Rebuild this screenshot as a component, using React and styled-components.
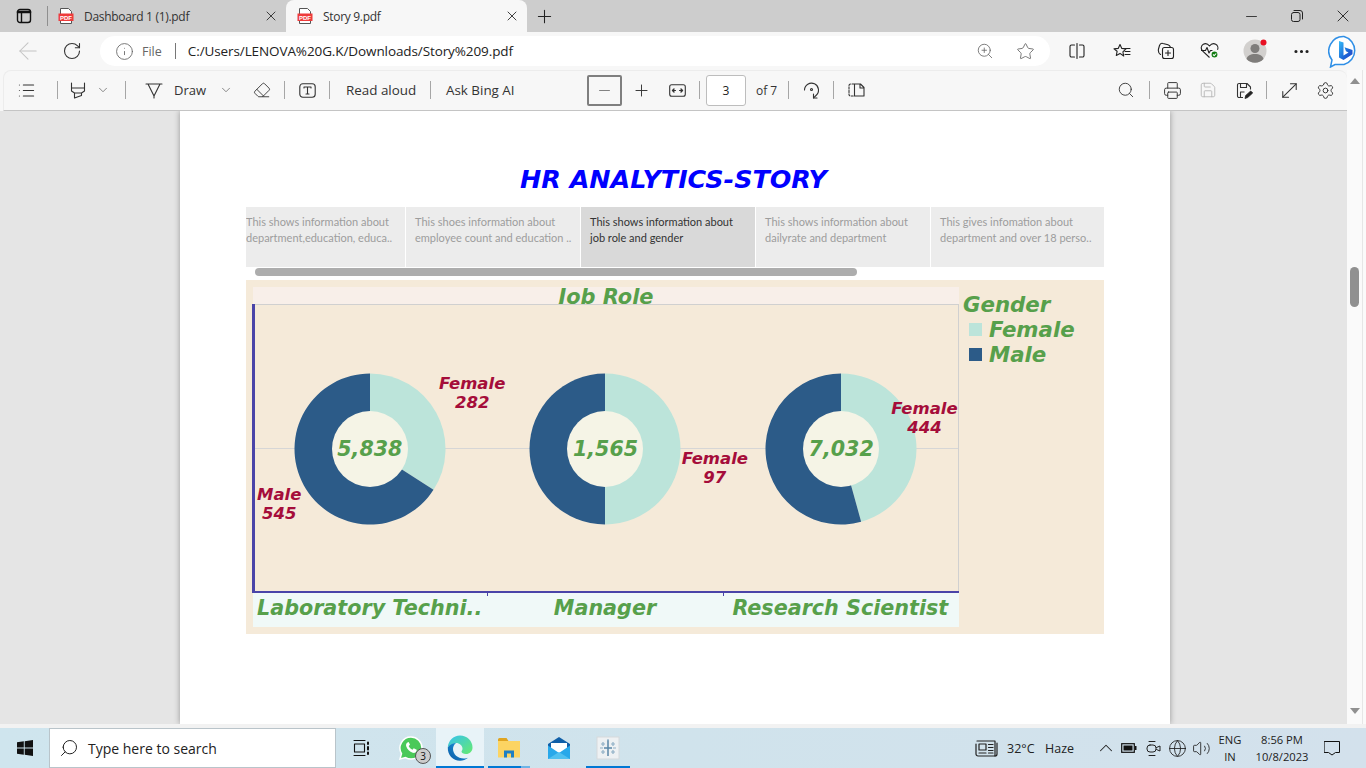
import React from "react"
import styled, { createGlobalStyle } from "styled-components"
import {
  ArrowLeft,
  ChevronDown,
  ChevronUp,
  Ellipsis,
  Globe,
  Info,
  List,
  Minus,
  MoveDiagonal,
  Plus,
  Printer,
  RotateCw,
  Save,
  Search,
  Settings,
  Star,
  Eraser,
  Volume2,
  X,
  ZoomIn,
} from "lucide-react"

const uiFont = `"Open Sans", "Noto Sans", sans-serif`
const chartFont = `"DejaVu Sans", sans-serif`
const storyFont = `"Lato", "Open Sans", sans-serif`

const storyPoints = [
  { width: 159, pad: 0, lines: ["This shows information about", "department,education, educa.."] },
  { width: 174, pad: 9, lines: ["This shoes information about", "employee count and education .."] },
  { width: 174, pad: 9, active: true, lines: ["This shows information about", "job role and gender"] },
  { width: 174, pad: 9, lines: ["This shows information about", "dailyrate and department"] },
  { width: 173, pad: 9, lines: ["This gives infomation about", "department and over 18 perso.."] },
]

const donuts = [
  { role: "Laboratory Techni..", total: "5,838", female: 0.341, label: ["Male", "545"], x: 5, y: 181 },
  { role: "Manager", total: "1,565", female: 0.5, label: ["Female", "97"], x: 194, y: 145 },
  { role: "Research Scientist", total: "7,032", female: 0.457, label: ["Female", "444"], x: 168, y: 95 },
]

export default function App() {
  return (
    <Screen>
      <GlobalStyle />
      <TitleBar>
        <Slot $w={47}><SidebarIcon /></Slot>
        <TabDivider />
        <Tab $w={238}>
          <PdfIcon />
          <TabName>Dashboard 1 (1).pdf</TabName>
          <X size={16} strokeWidth={1.4} color="#333" />
        </Tab>
        <Tab $w={241} $active>
          <PdfIcon />
          <TabName>Story 9.pdf</TabName>
          <X size={16} strokeWidth={1.4} color="#333" />
        </Tab>
        <Slot $w={34}><Plus size={21} strokeWidth={1.2} color="#222" /></Slot>
        <Spacer />
        <Slot $w={46}><Minus size={17} strokeWidth={1.2} color="#222" /></Slot>
        <Slot $w={46}><RestoreIcon /></Slot>
        <Slot $w={46}><X size={20} strokeWidth={1.1} color="#222" /></Slot>
      </TitleBar>

      <AddressRow>
        <Slot $w={56}><ArrowLeft size={28} strokeWidth={0.9} color="#c4c4c4" /></Slot>
        <Slot $w={32}><RotateCw size={20} strokeWidth={1.3} color="#333" /></Slot>
        <Slot $w={12} />
        <UrlPill>
          <Slot $w={25}><Info size={19} strokeWidth={1.1} color="#666" /></Slot>
          <FileLabel>File</FileLabel>
          <UrlDivider />
          <UrlText>C:/Users/LENOVA%20G.K/Downloads/Story%209.pdf</UrlText>
          <Spacer />
          <Slot $w={40}><ZoomIn size={18} strokeWidth={1.1} color="#666" /></Slot>
          <Slot $w={40}><Star size={19} strokeWidth={1.1} color="#666" /></Slot>
          <Slot $w={5} />
        </UrlPill>
        <Slot $w={5} />
        <Slot $w={44}><SplitIcon /></Slot>
        <Slot $w={45}><FavouritesIcon /></Slot>
        <Slot $w={44}><CollectionsIcon /></Slot>
        <Slot $w={44}><HealthIcon /></Slot>
        <Slot $w={48}><AvatarIcon /></Slot>
        <Slot $w={42}><Ellipsis size={19} strokeWidth={2} color="#222" /></Slot>
        <Slot $w={44}><BingIcon /></Slot>
      </AddressRow>

      <Body>
        <Column>
          <Toolbar>
            <Slot $w={45}><List size={19} strokeWidth={1.3} color="#333" /></Slot>
            <Slot $w={16}><Sep /></Slot>
            <Slot $w={25}><HighlighterIcon /></Slot>
            <Slot $w={26}><ChevronDown size={14} strokeWidth={1.3} color="#666" /></Slot>
            <Slot $w={18}><Sep /></Slot>
            <Slot $w={40}><DrawIcon /></Slot>
            <ToolLabel $w={36}>Draw</ToolLabel>
            <Slot $w={32}><ChevronDown size={14} strokeWidth={1.3} color="#666" /></Slot>
            <Slot $w={40}><Eraser size={18} strokeWidth={1.2} color="#333" /></Slot>
            <Slot $w={4}><Sep /></Slot>
            <Slot $w={42}><TextBoxIcon /></Slot>
            <Slot $w={2}><Sep /></Slot>
            <ToolLabel $w={99} $pad={16} $wide>Read aloud</ToolLabel>
            <Slot $w={2}><Sep /></Slot>
            <ToolLabel $w={156} $pad={15} $wide>Ask Bing AI</ToolLabel>
            <ZoomOutBox><Minus size={17} strokeWidth={1.3} color="#777" /></ZoomOutBox>
            <Slot $w={38}><Plus size={19} strokeWidth={1.2} color="#333" /></Slot>
            <Slot $w={34}><FitWidthIcon /></Slot>
            <Slot $w={11}><Sep /></Slot>
            <PageBox>3</PageBox>
            <ToolLabel $w={38} $pad={10} $small>of 7</ToolLabel>
            <Slot $w={8}><Sep /></Slot>
            <Slot $w={38}><RotateIcon /></Slot>
            <Slot $w={6}><Sep /></Slot>
            <Slot $w={40}><PageViewIcon /></Slot>
            <Spacer />
            <Slot $w={40}><Search size={18} strokeWidth={1.2} color="#333" /></Slot>
            <Slot $w={7}><Sep /></Slot>
            <Slot $w={38}><Printer size={19} strokeWidth={1.2} color="#333" /></Slot>
            <Slot $w={34}><Save size={18} strokeWidth={1.2} color="#b5b5b5" /></Slot>
            <Slot $w={38}><SaveAsIcon /></Slot>
            <Slot $w={6}><Sep /></Slot>
            <Slot $w={40}><MoveDiagonal size={23} strokeWidth={1.1} color="#333" /></Slot>
            <Slot $w={32}><Settings size={19} strokeWidth={1.2} color="#333" /></Slot>
            <Slot $w={6} />
          </Toolbar>

          <Viewer>
            <Page>
              <StoryTitle>HR ANALYTICS-STORY</StoryTitle>
              <StoryStrip>
                {storyPoints.map((point) => (
                  <StoryTab key={point.lines[0] + point.lines[1]} $w={point.width} $pad={point.pad} $active={point.active}>
                    {point.lines.map((line) => (
                      <div key={line}>{line}</div>
                    ))}
                  </StoryTab>
                ))}
              </StoryStrip>
              <StoryScroll />
              <Dashboard>
                <ChartPane>
                  <ChartHeader><HeaderText>Job Role</HeaderText></ChartHeader>
                  <Plot>
                    {donuts.map((d) => (
                      <DonutCell key={d.role}>
                        <Donut female={d.female} />
                        <DonutTotal>{d.total}</DonutTotal>
                        <MarkLabel $x={d.x} $y={d.y}>
                          {d.label[0]}
                          <br />
                          {d.label[1]}
                        </MarkLabel>
                        {d.role === "Laboratory Techni.." && (
                          <MarkLabel $x={187} $y={70}>
                            Female
                            <br />
                            282
                          </MarkLabel>
                        )}
                      </DonutCell>
                    ))}
                  </Plot>
                  <AxisRow>
                    {donuts.map((d) => (
                      <AxisCell key={d.role}>{d.role}</AxisCell>
                    ))}
                  </AxisRow>
                </ChartPane>
                <Legend>
                  <LegendTitle>Gender</LegendTitle>
                  <LegendItem><Swatch $color="#bce4da" />Female</LegendItem>
                  <LegendItem><Swatch $color="#2c5b88" />Male</LegendItem>
                </Legend>
              </Dashboard>
            </Page>
          </Viewer>
        </Column>
        <PageScroll>
          <ArrowUpGlyph />
          <Thumb />
          <ArrowDownGlyph />
        </PageScroll>
      </Body>

      <TaskStrip />
      <Taskbar>
        <Slot $w={49}><WindowsIcon /></Slot>
        <SearchBox>
          <Search size={20} strokeWidth={1.2} color="#222" style={{ transform: "scaleX(-1)" }} />
          <span>Type here to search</span>
        </SearchBox>
        <Slot $w={50}><TaskViewIcon /></Slot>
        <TaskApp $w={50}><WhatsAppIcon /><Badge>3</Badge></TaskApp>
        <TaskApp $w={48} $active $line={0}><EdgeIcon /></TaskApp>
        <TaskApp $w={50} $line={4} $fade><FolderIcon /></TaskApp>
        <TaskApp $w={50}><MailIcon /></TaskApp>
        <TaskApp $w={48} $line={2}><TableauIcon /></TaskApp>
        <Spacer />
        <Slot $w={30}><NewsIcon /></Slot>
        <Slot $w={6} />
        <TrayText $w={38}>32°C</TrayText>
        <TrayText $w={50}>Haze</TrayText>
        <Slot $w={22}><ChevronUp size={22} strokeWidth={1.1} color="#222" /></Slot>
        <Slot $w={24}><BatteryIcon /></Slot>
        <Slot $w={24}><CameraIcon /></Slot>
        <Slot $w={24}><Globe size={19} strokeWidth={1.1} color="#222" /></Slot>
        <Slot $w={24}><Volume2 size={19} strokeWidth={1.1} color="#222" /></Slot>
        <TrayStack $w={34}><span>ENG</span><span>IN</span></TrayStack>
        <TrayStack $w={70}><span>8:56 PM</span><span>10/8/2023</span></TrayStack>
        <Slot $w={30}><NoticeIcon /></Slot>
        <Slot $w={19} />
      </Taskbar>
    </Screen>
  )
}

function Donut({ female }) {
  const r = 75.5
  const hole = 38
  const c = 80
  const angle = female * Math.PI * 2
  const px = (radius) => c + radius * Math.sin(angle)
  const py = (radius) => c - radius * Math.cos(angle)
  const large = female > 0.5 ? 1 : 0
  const femalePath = `M${c} ${c}L${c} ${c - r}A${r} ${r} 0 ${large} 1 ${px(r)} ${py(r)}Z`
  const malePath = `M${c} ${c}L${px(r)} ${py(r)}A${r} ${r} 0 ${1 - large} 1 ${c} ${c - r}Z`
  return (
    <svg width="160" height="160" viewBox="0 0 160 160">
      <path d={femalePath} fill="#bce4da" />
      <path d={malePath} fill="#2c5b88" />
      <circle cx={c} cy={c} r={hole} fill="#f5f4e6" />
    </svg>
  )
}

function Svg({ w = 18, h = 18, box, children, stroke = "#333", sw = 1.2 }) {
  return (
    <svg width={w} height={h} viewBox={box || `0 0 ${w} ${h}`} fill="none" stroke={stroke} strokeWidth={sw} strokeLinejoin="round" strokeLinecap="round">
      {children}
    </svg>
  )
}

const SidebarIcon = () => (
  <Svg w={16} h={16} stroke="#111" sw={1.4}>
    <rect x="1.5" y="1.5" width="13" height="13" rx="2.5" />
    <path d="M2 4h12" strokeWidth="2.6" />
    <path d="M5.5 4v10" />
  </Svg>
)

const PdfIcon = () => (
  <svg width="16" height="16" viewBox="0 0 16 16">
    <path d="M2.5.5h8l3 3v12h-11z" fill="#fff" stroke="#555" strokeWidth="1" />
    <rect x="0.5" y="5.5" width="15" height="7.5" fill="#ee3b3b" />
    <text x="8" y="11.5" textAnchor="middle" fontSize="6" fontWeight="700" fill="#fff" fontFamily="Liberation Sans, sans-serif">PDF</text>
  </svg>
)

const RestoreIcon = () => (
  <Svg w={12} h={12} stroke="#222" sw={1}>
    <rect x="0.5" y="2.5" width="8.5" height="9" rx="2" />
    <path d="M3 .5h6a2.5 2.5 0 0 1 2.5 2.5v6" />
  </Svg>
)

const SplitIcon = () => (
  <Svg w={16} h={16} stroke="#222" sw={1.1}>
    <path d="M8 .5v15M5.5 2H2.5A1.5 1.5 0 0 0 1 3.5v9A1.5 1.5 0 0 0 2.5 14h3M10.5 2h3A1.5 1.5 0 0 1 15 3.5v9a1.5 1.5 0 0 1-1.500 1.500h-3" />
  </Svg>
)

const FavouritesIcon = () => (
  <Svg w={18} h={16} stroke="#222" sw={1.1}>
    <path d="M7 1.500l1.800 3.900 4.200.5-3.100 2.900.8 4.200L7 10.400 3.300 12.500l.8-4.200L1 5.900l4.200-.5z" />
    <path d="M12 5.500h5M12 8.500h5M12 11.500h5" />
  </Svg>
)

const CollectionsIcon = () => (
  <Svg w={18} h={18} stroke="#222" sw={1.1}>
    <rect x="5.500" y="5.500" width="11" height="11" rx="2" />
    <path d="M11 8.500v5M8.500 11h5" />
    <path d="M3.500 12.500C2 11.500 1 9.500 1.500 7L2.500 3.500C3 2 4.500 1 6 1.500l5 1.300c1.200.3 2 1.100 2.300 2.200" />
  </Svg>
)

const HealthIcon = () => (
  <svg width="20" height="18" viewBox="0 0 20 18" fill="none" stroke="#222" strokeWidth="1.1" strokeLinejoin="round">
    <path d="M9.500 15.500L2.500 8.800C.5 6.800 1 3.500 3.300 2.200c2-1 4.500-.5 6.200 1.800C11.200 1.700 13.700 1.200 15.700 2.200c2 1 2.700 3.500 1.800 5.500" />
    <path d="M1 8.500h4.500l1.500-3 2 5.500 1.500-2.500h2" />
    <circle cx="14.500" cy="12.500" r="3.500" fill="#107c10" stroke="#f7f7f7" />
    <path d="M13 12.500l1.200 1.200 2-2.200" stroke="#fff" />
  </svg>
)

const AvatarIcon = () => (
  <svg width="26" height="24" viewBox="0 0 26 24">
    <circle cx="12" cy="12" r="11.500" fill="#d2d0ce" />
    <circle cx="12" cy="9.500" r="4.500" fill="#7f7d7b" />
    <path d="M3.500 20c.8-3.500 4-5 8.500-5s7.700 1.500 8.500 5a11.500 11.500 0 0 1-17 0z" fill="#7f7d7b" />
    <circle cx="20.500" cy="3.500" r="3" fill="#e81123" />
  </svg>
)

const BingIcon = () => (
  <svg width="32" height="33" viewBox="0 0 32 33">
    <defs>
      <linearGradient id="bingGrad" x1="0" y1="0" x2="1" y2="1">
        <stop offset="0" stopColor="#37bdf8" />
        <stop offset="0.6" stopColor="#1b66d6" />
        <stop offset="1" stopColor="#2a3fc4" />
      </linearGradient>
    </defs>
    <path d="M16 1.500A14.500 14.500 0 0 1 16 29.500H7L2.500 32 4 25A14.500 14.500 0 0 1 16 1.500z" fill="#fff" stroke="#2f8fe6" strokeWidth="1.500" />
    <path d="M11 6l4.500 1.500v13l5-3-2.500-1.200-1.500-4 8 2.800v4.200L15.500 25 11 22.500z" fill="url(#bingGrad)" />
  </svg>
)

const HighlighterIcon = () => (
  <Svg w={16} h={17} stroke="#333" sw={1.1}>
    <path d="M1.500 1v5h13V1M1.500 6v3l3 2v5l7-2.500V11l3-2V6M4.500 11h7" />
  </Svg>
)

const DrawIcon = () => (
  <Svg w={18} h={18} stroke="#333" sw={1.1}>
    <path d="M1 3h16M3 3l6 12 6-12M9 15v2" />
  </Svg>
)

const TextBoxIcon = () => (
  <Svg w={17} h={15} stroke="#333" sw={1.1}>
    <rect x="0.800" y="0.800" width="15.400" height="13.400" rx="3" />
    <path d="M5 4h7M5 4v1M12 4v1M8.500 4v7M7 11h3" />
  </Svg>
)

const FitWidthIcon = () => (
  <Svg w={17} h={13} stroke="#333" sw={1.1}>
    <rect x="0.700" y="0.700" width="15.600" height="11.600" rx="2" />
    <path d="M3.500 6.500h3M10.500 6.500h3" />
    <path d="M5 5L3.500 6.500 5 8M12 5l1.500 1.500L12 8" strokeWidth="1.400" />
  </Svg>
)

const RotateIcon = () => (
  <Svg w={17} h={18} stroke="#333" sw={1.1}>
    <path d="M1.500 9A7 7 0 1 1 13 14.500L10.500 16.800" />
    <path d="M10.500 13v4h3.500" />
    <circle cx="8.500" cy="8.500" r="1" />
  </Svg>
)

const PageViewIcon = () => (
  <Svg w={17} h={14} stroke="#333" sw={1.1}>
    <path d="M6 1H2.500A1.500 1.500 0 0 0 1 2.500v9A1.500 1.500 0 0 0 2.500 13H6" strokeDasharray="2 1.500" />
    <path d="M6.500 1h6L16 4.500V13H6.500zM12 1v4h4" />
  </Svg>
)

const SaveAsIcon = () => (
  <svg width="17" height="17" viewBox="0 0 17 17" fill="none" stroke="#333" strokeWidth="1.1" strokeLinejoin="round">
    <path d="M7 15.500H3A1.500 1.500 0 0 1 1.500 14V3A1.500 1.500 0 0 1 3 1.500h8L14.500 5v2.500" />
    <path d="M4.500 1.500v4h6v-4M4.500 15v-5h4" />
    <path d="M9 16.500l.7-3 5-4.500 2 2-5 4.500z" fill="#222" stroke="#222" strokeWidth="0.800" />
  </svg>
)

const WindowsIcon = () => (
  <svg width="16" height="16" viewBox="0 0 16 16" fill="#111">
    <path d="M0 2.300L6.800 1.300v6.200H0zM7.700 1.200L16 0v7.500H7.700zM0 8.500h6.800v6.200L0 13.700zM7.700 8.500H16V16l-8.300-1.200z" />
  </svg>
)

const TaskViewIcon = () => (
  <Svg w={17} h={18} stroke="#111" sw={1.1}>
    <path d="M1 1.500h11M1 16.500h11" />
    <rect x="1.500" y="5" width="10" height="8" />
    <path d="M15 3.500v1.500M15 8v2.500M15 13.500V15" strokeWidth="2" />
  </Svg>
)

const WhatsAppIcon = () => (
  <svg width="24" height="24" viewBox="0 0 24 24">
    <path d="M12 1a11 11 0 0 1 0 22c-2 0-3.800-.5-5.400-1.400L1 23l1.500-5.400A11 11 0 0 1 12 1z" fill="#4ac959" stroke="#fff" strokeWidth="1.500" />
    <path d="M8.500 6.500c-1 .5-1.800 2-1.300 3.800 1 3 3.500 5.500 6.500 6.500 1.800.5 3.300-.3 3.800-1.500l.2-1.500-3-1.500-1.200 1.500c-1.800-.8-3-2-3.800-3.800l1.300-1.200-1.300-2.800z" fill="#fff" />
  </svg>
)

const EdgeIcon = () => (
  <svg width="26" height="26" viewBox="0 0 26 26">
    <defs>
      <linearGradient id="edgeA" x1="0" y1="1" x2="1" y2="0">
        <stop offset="0" stopColor="#0c59a4" />
        <stop offset="1" stopColor="#1b9de2" />
      </linearGradient>
      <linearGradient id="edgeB" x1="0" y1="0" x2="1" y2="1">
        <stop offset="0" stopColor="#35c1f1" />
        <stop offset="1" stopColor="#66eb6e" />
      </linearGradient>
    </defs>
    <path d="M13 .500C20 .500 25.500 6 25.500 12.500c0 4-3 6.500-6.500 6.500-2.500 0-4.500-1-4.500-2.500 0-.7 1-1 1-3 0-3-3-5.500-6.500-5.500C5 8.500 2.500 10 .800 12.500 1 6 6.500.500 13 .500z" fill="url(#edgeB)" />
    <path d="M.800 12.500C2.500 9.500 5.500 8 9 8c-2 1.500-3 3.500-3 6 0 5 4.500 9.500 11 9.500 1.500 0 3-.3 4-.8-2.200 2-5 3-8 3C6 25.700.500 20 .800 12.500z" fill="url(#edgeA)" />
  </svg>
)

const FolderIcon = () => (
  <svg width="24" height="22" viewBox="0 0 24 22">
    <path d="M1 2.500A1.500 1.500 0 0 1 2.500 1h7l2 3H1z" fill="#e0a420" />
    <path d="M1 4h22v16.500H1z" fill="#fcd462" />
    <path d="M7 20.500v-7h10v7h-3v-4h-4v4z" fill="#1e7fc4" />
  </svg>
)

const MailIcon = () => (
  <svg width="24" height="24" viewBox="0 0 24 24">
    <path d="M12 1L1 8v15h22V8z" fill="#0f5fa8" />
    <path d="M4 7h16v6l-8 5-8-5z" fill="#fff" />
    <path d="M1 9.500L12 17l11-7.500V23H1z" fill="#28a8ea" />
    <path d="M1 23l11-7 11 7z" fill="#50c0f0" />
  </svg>
)

const TableauIcon = () => (
  <svg width="24" height="24" viewBox="0 0 24 24" fill="none">
    <rect x="1" y="1" width="22" height="22" fill="#eef1f3" stroke="#d5d9dc" />
    <path d="M12 4v16M8 12h8" stroke="#5b87a8" strokeWidth="1.500" />
    <path d="M4 12h3M17 12h3M12 3v2M7 6v4M5 8h4M17 6v4M15 8h4M7 14v4M5 16h4M17 14v4M15 16h4" stroke="#8fb0c6" strokeWidth="1.200" />
  </svg>
)

const NewsIcon = () => (
  <Svg w={24} h={17} stroke="#222" sw={1.2}>
    <path d="M3 1h18v15H4a2 2 0 0 1-2-2V4" />
    <path d="M23 3v11a2 2 0 0 1-2 2" />
    <rect x="5" y="4" width="7" height="6" />
    <path d="M5 13h7M14.500 4.500H19M14.500 7.500H19M14.500 10.500H19M14.500 13H19" />
  </Svg>
)

const BatteryIcon = () => (
  <svg width="16" height="10" viewBox="0 0 16 10">
    <rect x="0.700" y="0.700" width="12.600" height="8.600" fill="none" stroke="#111" strokeWidth="1.200" />
    <rect x="2.500" y="2.500" width="9" height="5" fill="#111" />
    <rect x="14" y="3" width="1.500" height="4" fill="#111" />
  </svg>
)

const CameraIcon = () => (
  <Svg w={15} h={17} stroke="#222" sw={1}>
    <path d="M3 1.500h6M3 15.500h6" />
    <rect x="1" y="5" width="9" height="7" rx="3" />
    <path d="M10.500 7.500l3.500-1.500v5l-3.500-1.500" />
  </Svg>
)

const NoticeIcon = () => (
  <Svg w={16} h={16} stroke="#111" sw={1}>
    <path d="M.5 1.500h15v11h-4l-3.500 2.500-3.500-2.500h-4z" />
  </Svg>
)

const GlobalStyle = createGlobalStyle`
  html, body {
    margin: 0;
    padding: 0;
    overflow: hidden;
  }
  * {
    box-sizing: border-box;
  }
`

const Screen = styled.div`
  width: 1366px;
  height: 768px;
  display: flex;
  flex-direction: column;
  overflow: hidden;
  font-family: ${uiFont};
  color: #222;
  background: #f7f7f7;
`

const Spacer = styled.div`
  flex: 1;
`

const Slot = styled.div`
  flex: 0 0 ${(p) => p.$w}px;
  width: ${(p) => p.$w}px;
  display: flex;
  align-items: center;
  justify-content: center;
`

const TitleBar = styled.div`
  height: 32px;
  flex: none;
  display: flex;
  align-items: center;
  background: #cdcdcd;
`

const TabDivider = styled.div`
  width: 1px;
  height: 20px;
  background: #8f8f8f;
`

const Tab = styled.div`
  flex: 0 0 ${(p) => p.$w}px;
  height: 32px;
  display: flex;
  align-items: center;
  gap: 10px;
  padding: 0 7px 0 ${(p) => (p.$active ? 11 : 10)}px;
  border-radius: 8px 8px 0 0;
  background: ${(p) => (p.$active ? "#f7f7f7" : "transparent")};
`

const TabName = styled.span`
  flex: 1;
  font-size: 12px;
  letter-spacing: -0.3px;
  color: #333;
  white-space: nowrap;
`

const AddressRow = styled.div`
  height: 38px;
  flex: none;
  display: flex;
  align-items: center;
  background: #f7f7f7;
`

const UrlPill = styled.div`
  flex: 0 0 950px;
  height: 30px;
  display: flex;
  align-items: center;
  padding-left: 12px;
  background: #fff;
  border-radius: 15px;
  font-size: 13px;
`

const FileLabel = styled.span`
  margin-left: 5px;
  color: #666;
  font-size: 12.5px;
`

const UrlDivider = styled.div`
  width: 1px;
  height: 16px;
  margin: 0 12px 0 13px;
  background: #777;
`

const UrlText = styled.span`
  font-size: 13.5px;
  letter-spacing: -0.1px;
  color: #222;
  white-space: nowrap;
`

const Body = styled.div`
  flex: 1;
  min-height: 0;
  display: flex;
`

const Column = styled.div`
  flex: 0 0 1347px;
  display: flex;
  flex-direction: column;
  min-height: 0;
`

const Toolbar = styled.div`
  height: 41px;
  flex: none;
  display: flex;
  align-items: center;
  margin-left: 3px;
  padding: 0 0 1px 0;
  background: #f7f7f7;
  border-top: 1px solid #ececec;
  border-left: 1px solid #ececec;
  border-bottom: 1px solid #c4c4c4;
  border-radius: 8px 8px 0 0;
  z-index: 1;
`

const Sep = styled.div`
  flex: none;
  width: 1px;
  height: 18px;
  background: #a6a6a6;
`

const ToolLabel = styled.div`
  flex: 0 0 ${(p) => p.$w}px;
  padding-left: ${(p) => p.$pad || 0}px;
  font-size: ${(p) => (p.$small ? 12 : p.$wide ? 13.4 : 13)}px;
  color: #333;
  white-space: nowrap;
`

const ZoomOutBox = styled.div`
  flex: 0 0 35px;
  height: 31px;
  display: flex;
  align-items: center;
  justify-content: center;
  border: 2px solid #7f7f7f;
  border-radius: 2px;
`

const PageBox = styled.div`
  flex: 0 0 40px;
  height: 31px;
  margin-left: 1px;
  display: flex;
  align-items: center;
  justify-content: center;
  font-size: 12px;
  background: #fff;
  border: 1px solid #bdbdbd;
  border-radius: 3px;
`

const Viewer = styled.div`
  flex: 1;
  min-height: 0;
  overflow: hidden;
  padding-left: 180px;
  background: #e5e5e5;
`

const Page = styled.div`
  width: 990px;
  height: 100%;
  padding: 50px 66px 0;
  background: #fff;
  box-shadow: 0 0 6px rgba(0, 0, 0, 0.35);
`

const StoryTitle = styled.h1`
  margin: 0 0 10px;
  padding-right: 3px;
  height: 36px;
  line-height: 36px;
  text-align: center;
  font-family: ${chartFont};
  font-size: 25.4px;
  font-weight: 700;
  font-style: italic;
  color: #0000ff;
`

const StoryStrip = styled.div`
  display: flex;
  gap: 1px;
  height: 60px;
`

const StoryTab = styled.div`
  flex: 0 0 ${(p) => p.$w}px;
  padding: 7px 0 0 ${(p) => p.$pad}px;
  font-family: ${storyFont};
  font-size: 11px;
  line-height: 16px;
  white-space: nowrap;
  overflow: hidden;
  color: ${(p) => (p.$active ? "#333" : "#9d9d9d")};
  background: ${(p) => (p.$active ? "#d9d9d9" : "#ececec")};
`

const StoryScroll = styled.div`
  width: 602px;
  height: 8px;
  margin: 1px 0 4px 9px;
  border-radius: 4px;
  background: #adadad;
`

const Dashboard = styled.div`
  height: 354px;
  display: flex;
  padding: 7px 0 7px 7px;
  background: #f5ead9;
  font-family: ${chartFont};
  font-weight: 700;
  font-style: italic;
`

const ChartPane = styled.div`
  flex: 0 0 706px;
  display: flex;
  flex-direction: column;
`

const ChartHeader = styled.div`
  height: 17px;
  overflow: hidden;
  text-align: center;
  background: #f8efe9;
`

const HeaderText = styled.div`
  font-size: 20.9px;
  line-height: 20px;
  color: #57a04b;
`

const Plot = styled.div`
  position: relative;
  height: 289px;
  margin-left: -1px;
  display: grid;
  grid-template-columns: repeat(3, 1fr);
  box-shadow: inset 3px 0 0 #4a44a8, inset 0 -2px 0 #4a44a8, inset -1px 0 0 #d0d0d0, inset 0 1px 0 #d0d0d0;

  &::before {
    content: "";
    position: absolute;
    left: 3px;
    right: 1px;
    top: 144px;
    height: 1px;
    background: #d6d6d6;
  }
`

const DonutCell = styled.div`
  position: relative;
  display: flex;
  align-items: center;
  justify-content: center;

  svg {
    position: relative;
  }
`

const DonutTotal = styled.div`
  position: absolute;
  left: 0;
  right: 0;
  top: 131px;
  text-align: center;
  font-size: 20.6px;
  line-height: 28px;
  color: #57a04b;
`

const MarkLabel = styled.div`
  position: absolute;
  left: ${(p) => p.$x}px;
  top: ${(p) => p.$y}px;
  text-align: center;
  font-size: 16.5px;
  line-height: 19px;
  color: #a50d3a;
`

const AxisRow = styled.div`
  flex: 1;
  display: grid;
  grid-template-columns: repeat(3, 1fr);
  background: #f0f9f8;
`

const AxisCell = styled.div`
  position: relative;
  padding-right: 2px;
  text-align: center;
  font-size: 20.7px;
  line-height: 30px;
  color: #57a04b;
  white-space: nowrap;

  & + &::before {
    content: "";
    position: absolute;
    left: -1px;
    top: 0;
    width: 1px;
    height: 3px;
    background: #4a44a8;
  }
`

const Legend = styled.div`
  flex: 1;
  padding: 6px 0 0 4px;
  color: #57a04b;
  font-size: 21.3px;
`

const LegendTitle = styled.div`
  line-height: 24px;
`

const LegendItem = styled.div`
  display: flex;
  align-items: center;
  gap: 7px;
  height: 25px;
  padding-left: 6px;
`

const Swatch = styled.span`
  width: 13px;
  height: 13px;
  background: ${(p) => p.$color};
`

const PageScroll = styled.div`
  flex: 1;
  display: flex;
  flex-direction: column;
  align-items: flex-start;
  padding-left: 3px;
  background: #fafafa;
  background-image: linear-gradient(#e6e6e6, #e6e6e6);
  background-size: 1px 100%;
  background-position: 15px 0;
  background-repeat: no-repeat;
`

const ArrowUpGlyph = styled.div`
  margin: 8px 0 0 0;
  width: 0;
  height: 0;
  border-left: 5px solid transparent;
  border-right: 5px solid transparent;
  border-bottom: 6px solid #909090;
`

const Thumb = styled.div`
  width: 9px;
  height: 40px;
  margin-top: 183px;
  border-radius: 4.5px;
  background: #909090;
`

const ArrowDownGlyph = styled.div`
  margin-top: 401px;
  width: 0;
  height: 0;
  border-left: 5px solid transparent;
  border-right: 5px solid transparent;
  border-top: 6px solid #909090;
`

const TaskStrip = styled.div`
  height: 4px;
  flex: none;
  background: #f2f2f2;
`

const Taskbar = styled.div`
  height: 40px;
  flex: none;
  display: flex;
  align-items: center;
  background: linear-gradient(90deg, #cfe5ee, #d0e3ec 50%, #d3e1ec);
  font-size: 12px;
`

const SearchBox = styled.div`
  flex: 0 0 287px;
  height: 40px;
  display: flex;
  align-items: center;
  gap: 9px;
  padding-left: 9px;
  background: #fff;
  border: 1px solid #b9c4ca;
  font-size: 14px;
  color: #222;
`

const TaskApp = styled.div`
  position: relative;
  flex: 0 0 ${(p) => p.$w}px;
  height: 40px;
  display: flex;
  align-items: center;
  justify-content: center;
  background: ${(p) => (p.$active ? "#e8f3f8" : "transparent")};

  &::after {
    content: "";
    display: ${(p) => (p.$line === undefined ? "none" : "block")};
    position: absolute;
    left: ${(p) => p.$line || 0}px;
    right: ${(p) => p.$line || 0}px;
    bottom: 0;
    height: 2px;
    background: ${(p) => (p.$fade ? "linear-gradient(90deg, #0078d4 78%, #6db4e6 78%)" : "#0078d4")};
  }
`

const Badge = styled.span`
  position: absolute;
  left: 29px;
  top: 20px;
  width: 16px;
  height: 16px;
  display: flex;
  align-items: center;
  justify-content: center;
  border-radius: 50%;
  border: 1px solid #555;
  background: #ccc;
  font-size: 10px;
  color: #111;
`

const TrayText = styled.div`
  flex: 0 0 ${(p) => p.$w}px;
  font-size: 12.5px;
  color: #222;
  white-space: nowrap;
`

const TrayStack = styled.div`
  flex: 0 0 ${(p) => p.$w}px;
  display: flex;
  flex-direction: column;
  align-items: center;
  font-size: 11.2px;
  line-height: 17px;
  color: #222;
`
